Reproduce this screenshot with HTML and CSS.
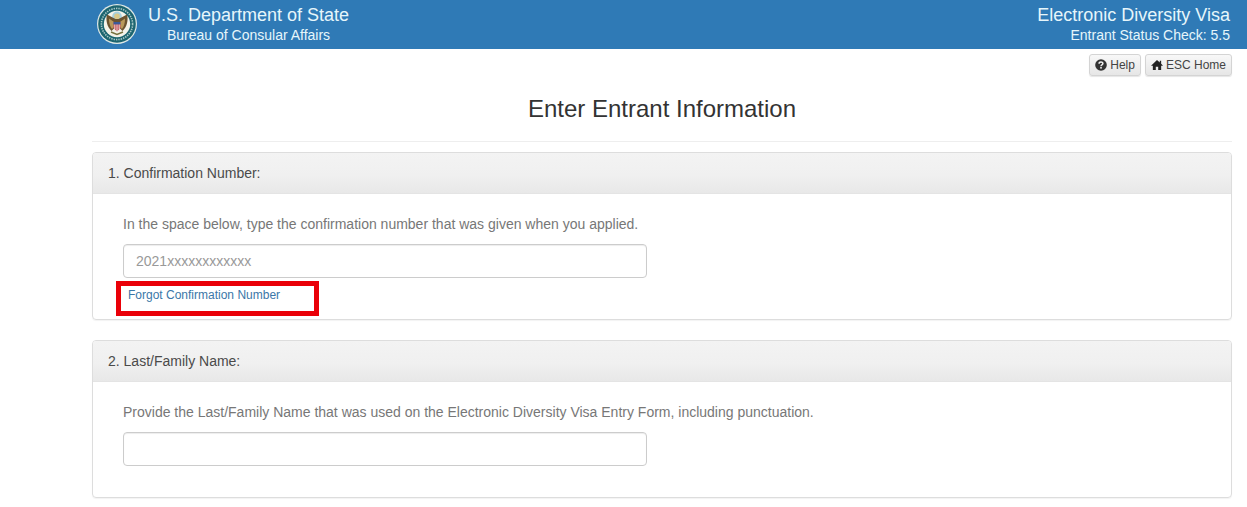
FILE: index.html
```html
<!DOCTYPE html>
<html lang="en">
<head>
<meta charset="utf-8">
<title>Enter Entrant Information</title>
<link rel="stylesheet" href="styles.css">
</head>
<body>
<header class="banner">
  <div class="brand">
    <svg class="seal" viewBox="0 0 40 40" width="40" height="40" aria-hidden="true">
      <circle cx="20" cy="20" r="20" fill="#dfe9e6"/>
      <circle cx="20" cy="20" r="18.8" fill="#1c6570"/>
      <circle cx="20" cy="20" r="15.600" fill="none" stroke="#a9c7c6" stroke-width="1.600" stroke-dasharray="1.400 1"/>
      <circle cx="20" cy="20" r="13.200" fill="#f4f3ea"/>
      <circle cx="20" cy="12.300" r="4.800" fill="#a8d0de"/>
      <circle cx="20" cy="12.300" r="2.800" fill="#d9c98a"/>
      <path d="M18.500 15 L10 10.500 C8.500 16 10 23 14.500 27 L17 24.500 V18 H23 V24.500 L25.500 27 C30 23 31.500 16 30 10.500 L21.500 15 Z" fill="#6b5330"/>
      <path d="M12 14.500 C12 19 13 22.500 15 25 L17 23 V18 Z M28 14.500 C28 19 27 22.500 25 25 L23 23 V18 Z" fill="#b8995a"/>
      <path d="M16.500 18 H23.500 V24 L20 27.500 L16.500 24 Z" fill="#c4505a"/>
      <path d="M16.500 18 H23.500 V20.500 H16.500 Z" fill="#3a5a9a"/>
      <path d="M17.800 20.500 V25 M20 20.500 V27 M22.200 20.500 V25" stroke="#f4f3ea" stroke-width=".8"/>
      <path d="M14 28 L20 30.500 L26 28" stroke="#77723f" stroke-width="1.500" fill="none"/>
    </svg>
    <div class="brand-text">
      <div class="brand-title">U.S. Department of State</div>
      <div class="brand-sub">Bureau of Consular Affairs</div>
    </div>
  </div>
  <div class="app">
    <div class="app-title">Electronic Diversity Visa</div>
    <div class="app-sub">Entrant Status Check: 5.5</div>
  </div>
</header>

<main class="page">
  <nav class="actions">
    <a class="btn" href="#">
      <svg class="btn-icon" viewBox="0 0 12 12" width="12" height="12" aria-hidden="true">
        <circle cx="6" cy="6" r="5.800" fill="#333"/>
        <path d="M4.100 4.700 C4.100 2.500 7.900 2.500 7.900 4.600 C7.900 6 6 5.900 6 7.200" fill="none" stroke="#f0f0f0" stroke-width="1.500"/>
        <rect x="5.200" y="8" width="1.600" height="1.600" fill="#f0f0f0"/>
      </svg>Help</a>
    <a class="btn" href="#">
      <svg class="btn-icon" viewBox="0 0 13 12" width="12" height="12" aria-hidden="true">
        <path d="M6.500 .5 L9.500 3.300 V1.500 H11 V4.700 L13 6.700 H11 V11.500 H7.800 V8 H5.200 V11.500 H2 V6.700 H0 Z" fill="#222"/>
      </svg>ESC Home</a>
  </nav>

  <h1 class="title">Enter Entrant Information</h1>

  <section class="panel panel-first">
    <h2 class="panel-heading">1. Confirmation Number:</h2>
    <div class="panel-body">
      <p class="hint">In the space below, type the confirmation number that was given when you applied.</p>
      <input class="field" type="text" placeholder="2021xxxxxxxxxxxx">
      <div class="forgot">
        <a class="forgot-link" href="#">Forgot Confirmation Number</a>
        <span class="annotation"></span>
      </div>
    </div>
  </section>

  <section class="panel">
    <h2 class="panel-heading">2. Last/Family Name:</h2>
    <div class="panel-body panel-body-last">
      <p class="hint">Provide the Last/Family Name that was used on the Electronic Diversity Visa Entry Form, including punctuation.</p>
      <input class="field" type="text">
    </div>
  </section>
</main>
</body>
</html>
```
FILE: styles.css
```css
* { box-sizing: border-box; }

html, body { margin: 0; padding: 0; }

body {
  background: #fff;
  color: #333;
  font-family: "Liberation Sans", Arial, sans-serif;
  font-size: 14px;
  line-height: 20px;
  height: 507px;
  overflow: hidden;
}

.banner {
  height: 49px;
  background: #2f7ab6;
  color: #e6f6fb;
  display: flex;
  justify-content: space-between;
  padding: 0 17px 0 97px;
}

.brand { display: flex; gap: 11px; padding-top: 4px; }
.seal { flex: none; }

.brand-text { text-align: center; padding-top: 1px; }
.brand-title { font-size: 18px; line-height: 20px; }
.brand-sub { font-size: 14px; line-height: 20px; }

.app { text-align: right; padding-top: 5px; }
.app-title { font-size: 18px; line-height: 20px; }
.app-sub { font-size: 14px; line-height: 20px; }

.page { padding: 5px 15px 0 92px; }

.actions { display: flex; justify-content: flex-end; gap: 4px; }

.btn {
  display: flex;
  align-items: center;
  gap: 3px;
  height: 22px;
  padding: 0 5px;
  font-size: 12px;
  color: #444;
  text-decoration: none;
  border: 1px solid #d4d4d4;
  border-radius: 3px;
  background: linear-gradient(#f8f8f8, #e6e6e6);
  box-shadow: 0 1px 1px rgba(0, 0, 0, .1);
}

.btn-icon { flex: none; }

.title {
  margin: 18px 0 0;
  height: 48px;
  border-bottom: 1px solid #eee;
  text-align: center;
  font-size: 24px;
  line-height: 30px;
  font-weight: 400;
  color: #333;
}

.panel {
  margin-top: 20px;
  border: 1px solid #ddd;
  border-radius: 4px;
  box-shadow: 0 1px 1px rgba(0, 0, 0, .05);
  overflow: hidden;
}

.panel-first { margin-top: 10px; }

.panel-heading {
  margin: 0;
  height: 41px;
  padding: 10px 15px;
  font-size: 14px;
  line-height: 20px;
  font-weight: 400;
  color: #4a4a4a;
  background: linear-gradient(#f3f3f3, #f0f0f0 55%, #e8e8e8);
  border-bottom: 1px solid #e4e4e4;
}

.panel-body { padding: 20px 30px 0; height: 125px; }
.panel-body-last { height: 115px; }

.hint { margin: 0 0 10px; color: #777; }

.field {
  display: block;
  width: 524px;
  height: 34px;
  padding: 6px 12px;
  font: 14px/20px "Liberation Sans", Arial, sans-serif;
  color: #555;
  background: #fff;
  border: 1px solid #ccc;
  border-radius: 4px;
  box-shadow: inset 0 1px 1px rgba(0, 0, 0, .075);
}

.field::placeholder { color: #999; opacity: 1; }

.forgot { position: relative; padding: 7px 0 0 5px; }

.forgot-link {
  display: block;
  font-size: 12px;
  line-height: 20px;
  color: #3b77a8;
  text-decoration: none;
}

.annotation {
  position: absolute;
  left: -7px;
  top: 3px;
  width: 203px;
  height: 35px;
  border: 5px solid #ea0008;
}
```
